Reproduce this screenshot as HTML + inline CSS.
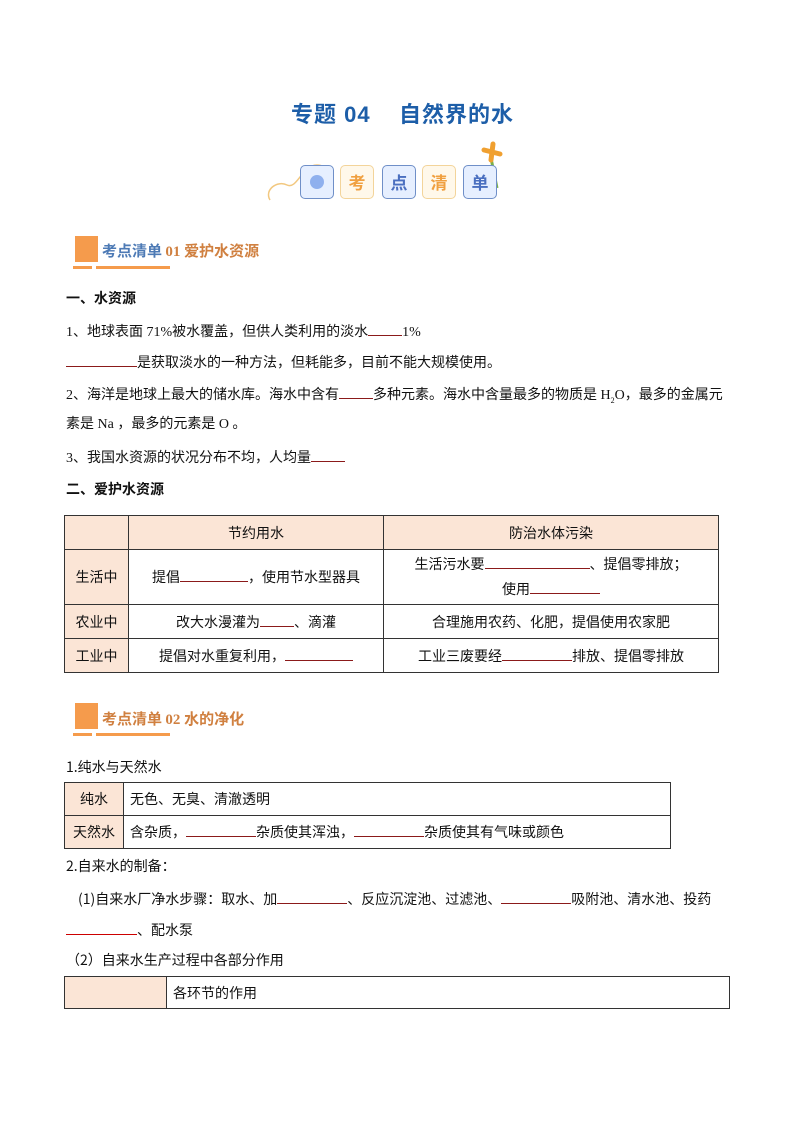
<!DOCTYPE html>
<html><head><meta charset="utf-8"><style>
body{margin:0;width:794px;height:1123px;background:#fff;position:relative;font-family:"Liberation Serif","Noto Sans CJK SC",sans-serif;color:#111;overflow:hidden}
.a{position:absolute;white-space:nowrap;font-size:14px;line-height:17px}
.b{display:inline-block;border-bottom:1.3px solid #8b1a1a;height:13px;vertical-align:baseline}
.bx{position:absolute;width:32px;height:32px;border-radius:5px;top:165px;font:bold 17px/32px "Noto Sans CJK SC",sans-serif;text-align:center}
.bl{background:#e6efff;border:1.5px solid #6f8fc8;color:#4a6fc0}
.or{background:#fff8ea;border:1.5px solid #f3d49a;color:#f0a040}
table{position:absolute;border-collapse:collapse;font-size:14px;font-family:"Noto Sans CJK SC",sans-serif}
td{border:1px solid #333;padding:0;text-align:center}
.p{background:#fbe5d6}
.h{position:absolute;font-family:"Noto Sans CJK SC",sans-serif;font-weight:bold;font-size:15px}
</style></head><body>
<div class="a" style="left:291px;top:100px;font:bold 22px/30px 'Liberation Sans','Noto Sans CJK SC',sans-serif;color:#1d5ea8;letter-spacing:1px">专题 04&nbsp;&nbsp;&nbsp;&nbsp;自然界的水</div>
<svg style="position:absolute;left:262px;top:140px" width="250" height="65"><path d="M8 60 C2 50 15 40 25 45 C35 50 40 25 55 25 C65 25 72 35 60 50" fill="none" stroke="#f2c880" stroke-width="1.5"/><path d="M229 18 L235 48" stroke="#7bb04a" stroke-width="3"/><path d="M222 10 L238 14 M231 4 L229 20" stroke="#f0a030" stroke-width="5" stroke-linecap="round"/></svg>
<div class="bx bl" style="left:300px"><span style="display:inline-block;width:14px;height:14px;border-radius:50%;background:#8fb0ee;margin-top:9px"></span></div>
<div class="bx or" style="left:340px">考</div>
<div class="bx bl" style="left:382px">点</div>
<div class="bx or" style="left:422px">清</div>
<div class="bx bl" style="left:463px">单</div>

<div style="position:absolute;left:75px;top:236px;width:23px;height:26px;background:#f59b4c"></div>
<div style="position:absolute;left:73px;top:266px;width:19px;height:3px;background:#f59b4c"></div>
<div style="position:absolute;left:96px;top:266px;width:74px;height:3px;background:#f59b4c"></div>
<div class="h" style="left:102px;top:240px"><span style="color:#4d7ab5">考点清单</span> <span style="color:#d08040;font-family:'Liberation Serif','Noto Sans CJK SC',serif">01 爱护水资源</span></div>

<div class="a" style="left:66px;top:290px;font-weight:bold;font-family:'Noto Sans CJK SC',sans-serif">一、水资源</div>
<div class="a" style="left:66px;top:322px">1、地球表面 71%被水覆盖，但供人类利用的淡水<span class="b" style="width:34px"></span>1%</div>
<div class="a" style="left:66px;top:353px"><span class="b" style="width:71px"></span>是获取淡水的一种方法，但耗能多，目前不能大规模使用。</div>
<div class="a" style="left:66px;top:385px">2、海洋是地球上最大的储水库。海水中含有<span class="b" style="width:34px"></span>多种元素。海水中含量最多的物质是 H<sub style="font-size:8px">2</sub>O，最多的金属元</div>
<div class="a" style="left:66px;top:416px">素是 Na ，最多的元素是 O 。</div>
<div class="a" style="left:66px;top:448px">3、我国水资源的状况分布不均，人均量<span class="b" style="width:34px"></span></div>
<div class="a" style="left:66px;top:481px;font-weight:bold;font-family:'Noto Sans CJK SC',sans-serif">二、爱护水资源</div>

<table style="left:64px;top:515px;width:655px">
<tr style="height:34px"><td class="p" style="width:63px"></td><td class="p" style="width:254px">节约用水</td><td class="p">防治水体污染</td></tr>
<tr style="height:55px"><td class="p">生活中</td><td>提倡<span class="b" style="width:68px"></span>，使用节水型器具</td><td style="line-height:25px">生活污水要<span class="b" style="width:105px"></span>、提倡零排放；<br>使用<span class="b" style="width:70px"></span></td></tr>
<tr style="height:34px"><td class="p">农业中</td><td>改大水漫灌为<span class="b" style="width:34px"></span>、滴灌</td><td>合理施用农药、化肥，提倡使用农家肥</td></tr>
<tr style="height:34px"><td class="p">工业中</td><td>提倡对水重复利用，<span class="b" style="width:68px"></span></td><td>工业三废要经<span class="b" style="width:70px"></span>排放、提倡零排放</td></tr>
</table>

<div style="position:absolute;left:75px;top:703px;width:23px;height:26px;background:#f59b4c"></div>
<div style="position:absolute;left:73px;top:733px;width:19px;height:3px;background:#f59b4c"></div>
<div style="position:absolute;left:96px;top:733px;width:74px;height:3px;background:#f59b4c"></div>
<div class="h" style="left:102px;top:708px"><span style="color:#d08040">考点清单</span> <span style="color:#d08040;font-family:'Liberation Serif','Noto Sans CJK SC',serif">02 水的净化</span></div>

<div class="a" style="left:66px;top:759px;font-family:'Noto Sans CJK SC',sans-serif">1.纯水与天然水</div>
<table style="left:64px;top:782px;width:607px">
<tr style="height:33px"><td class="p" style="width:58px">纯水</td><td style="text-align:left;padding-left:6px">无色、无臭、清澈透明</td></tr>
<tr style="height:33px"><td class="p">天然水</td><td style="text-align:left;padding-left:6px">含杂质，<span class="b" style="width:70px"></span>杂质使其浑浊，<span class="b" style="width:70px"></span>杂质使其有气味或颜色</td></tr>
</table>
<div class="a" style="left:66px;top:858px;font-family:'Noto Sans CJK SC',sans-serif">2.自来水的制备：</div>
<div class="a" style="left:78px;top:890px;font-family:'Noto Sans CJK SC',sans-serif">(1)自来水厂净水步骤：取水、加<span class="b" style="width:70px"></span>、反应沉淀池、过滤池、<span class="b" style="width:70px"></span>吸附池、清水池、投药</div>
<div class="a" style="left:66px;top:921px;font-family:'Noto Sans CJK SC',sans-serif"><span class="b" style="width:71px;border-color:#c00"></span>、配水泵</div>
<div class="a" style="left:66px;top:952px;font-family:'Noto Sans CJK SC',sans-serif">（2）自来水生产过程中各部分作用</div>
<table style="left:64px;top:976px;width:666px">
<tr style="height:32px"><td class="p" style="width:101px"></td><td style="text-align:left;padding-left:6px">各环节的作用</td></tr>
</table>
</body></html>
